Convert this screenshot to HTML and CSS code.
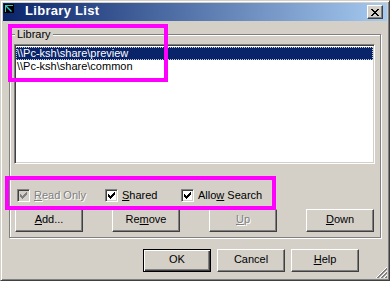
FILE: index.html
```html
<!DOCTYPE html>
<html>
<head>
<meta charset="utf-8">
<title>Library List</title>
<link rel="stylesheet" href="styles.css">
</head>
<body>
<div class="window">
  <div class="titlebar">
    <svg class="app-icon" width="10" height="9" viewBox="0 0 10 9">
      <rect width="10" height="9" fill="#000"/>
      <polygon points="1,1 9,1 9,2 3,2 8,7 7,8 2,3 2,8 1,8" fill="#33c6c6"/>
    </svg>
    <span class="title">Library List</span>
    <div class="close-btn">
      <svg width="8" height="7" viewBox="0 0 8 7"><path d="M0 0h2v1H0z M6 0h2v1H6z M1 1h2v1H1z M5 1h2v1H5z M2 2h4v1H2z M3 3h2v1H3z M2 4h4v1H2z M1 5h2v1H1z M5 5h2v1H5z M0 6h2v1H0z M6 6h2v1H6z" fill="#000"/></svg>
    </div>
  </div>
  <div class="content">
    <fieldset class="group">
      <legend>Library</legend>
      <div class="listbox">
        <div class="item selected">\\Pc-ksh\share\preview</div>
        <div class="item">\\Pc-ksh\share\common</div>
      </div>
      <div class="checks">
        <div class="check disabled w1">
          <span class="box"><svg width="7" height="7" viewBox="0 0 7 7"><path d="M6 0h1v1H6z M5 1h2v1H5z M0 2h1v1H0z M4 2h3v1H4z M0 3h2v1H0z M3 3h3v1H3z M0 4h5v1H0z M1 5h3v1H1z M2 6h1v1H2z"/></svg></span>
          <span class="lbl"><u>R</u>ead Only</span>
        </div>
        <div class="check w2">
          <span class="box"><svg width="7" height="7" viewBox="0 0 7 7"><path d="M6 0h1v1H6z M5 1h2v1H5z M0 2h1v1H0z M4 2h3v1H4z M0 3h2v1H0z M3 3h3v1H3z M0 4h5v1H0z M1 5h3v1H1z M2 6h1v1H2z"/></svg></span>
          <span class="lbl"><u>S</u>hared</span>
        </div>
        <div class="check">
          <span class="box"><svg width="7" height="7" viewBox="0 0 7 7"><path d="M6 0h1v1H6z M5 1h2v1H5z M0 2h1v1H0z M4 2h3v1H4z M0 3h2v1H0z M3 3h3v1H3z M0 4h5v1H0z M1 5h3v1H1z M2 6h1v1H2z"/></svg></span>
          <span class="lbl">Allo<u>w</u> Search</span>
        </div>
      </div>
      <div class="btn-row">
        <button class="btn"><u>A</u>dd...</button>
        <button class="btn">Re<u>m</u>ove</button>
        <button class="btn disabled"><u>U</u>p</button>
        <button class="btn"><u>D</u>own</button>
      </div>
    </fieldset>
    <div class="footer">
      <button class="btn default">OK</button>
      <button class="btn">Cancel</button>
      <button class="btn"><u>H</u>elp</button>
    </div>
  </div>
  <svg class="grip" width="12" height="12" viewBox="0 0 12 12">
    <path d="M11 0L0 11 M11 4L4 11 M11 8L8 11" stroke="#fff" stroke-width="1"/>
    <path d="M11 1L1 11 M11 2L2 11 M11 5L5 11 M11 6L6 11 M11 9L9 11 M11 10L10 11" stroke="#808080" stroke-width="1"/>
  </svg>
</div>
<div class="mark mark-list"></div>
<div class="mark mark-checks"></div>
</body>
</html>
```

FILE: styles.css
```css
html, body {
  margin: 0;
  padding: 0;
}

body {
  width: 390px;
  height: 281px;
  overflow: hidden;
  background: #d4d0c8;
  font-family: "Liberation Sans", Arial, sans-serif;
  font-size: 11px;
  color: #000;
}

.window {
  box-sizing: border-box;
  width: 390px;
  height: 281px;
  border: 1px solid;
  border-color: #d4d0c8 #404040 #404040 #d4d0c8;
  padding: 2px;
  box-shadow: inset 1px 1px #fff, inset -1px -1px #808080;
  background: #d4d0c8;
  display: flex;
  flex-direction: column;
  position: relative;
}

.titlebar {
  height: 18px;
  box-sizing: border-box;
  padding: 1px 4px 0 1px;
  background: linear-gradient(to right, #0a246a, #a6caf0);
  display: flex;
  align-items: flex-start;
}

.app-icon {
  display: block;
  flex: none;
}

.title {
  flex: 1;
  margin-left: 11px;
  color: #fff;
  font-weight: bold;
  font-size: 13px;
  line-height: 13px;
  letter-spacing: 0.3px;
  white-space: nowrap;
}

.close-btn {
  flex: none;
  width: 16px;
  height: 14px;
  margin-top: 1px;
  box-sizing: border-box;
  background: #d4d0c8;
  border: 1px solid;
  border-color: #fff #404040 #404040 #fff;
  box-shadow: inset -1px -1px #808080;
  display: flex;
  align-items: center;
  justify-content: center;
}

.close-btn svg {
  display: block;
}

.content {
  flex: 1;
  padding: 7px 6px 0 6px;
  display: flex;
  flex-direction: column;
}

.group {
  margin: 0;
  padding: 3px 5px 5px 4px;
  min-width: 0;
  border: 1px solid #808080;
  box-shadow: inset 1px 1px #fff, 1px 1px #fff;
}

.group legend {
  margin-left: 1px;
  padding: 0 2px;
  line-height: 13px;
  background: #d4d0c8;
}

.listbox {
  height: 120px;
  box-sizing: border-box;
  background: #fff;
  border: 1px solid;
  border-color: #808080 #fff #fff #808080;
  box-shadow: inset 1px 1px #404040, inset -1px -1px #d4d0c8;
  padding: 2px 1px 0 1px;
}

.item {
  height: 13px;
  line-height: 13px;
  padding-left: 1px;
  white-space: nowrap;
}

.item.selected {
  background: #0a246a;
  color: #fff;
  outline: 1px dotted #c8cce0;
  outline-offset: -1px;
}

.checks {
  display: flex;
  align-items: center;
  height: 13px;
  margin-top: 25px;
  padding-left: 3px;
}

.check {
  display: flex;
  align-items: center;
  gap: 4px;
}

.check.w1 {
  width: 88px;
}

.check.w2 {
  width: 76px;
}

.box {
  flex: none;
  width: 13px;
  height: 13px;
  box-sizing: border-box;
  border: 1px solid;
  border-color: #808080 #fff #fff #808080;
  box-shadow: inset 1px 1px #404040, inset -1px -1px #d4d0c8;
  background: #fff;
  display: flex;
  align-items: center;
  justify-content: center;
}

.box svg {
  display: block;
  fill: #000;
}

.lbl {
  line-height: 13px;
  white-space: nowrap;
}

.check.disabled .box {
  background: #d4d0c8;
}

.check.disabled .box svg {
  fill: #808080;
}

.check.disabled .lbl {
  color: #808080;
  text-shadow: 1px 1px #fff;
}

u {
  text-underline-offset: 1px;
}

.btn-row {
  display: flex;
  justify-content: space-between;
  margin: 7px 1px 0 1px;
}

.btn {
  width: 68px;
  height: 23px;
  box-sizing: border-box;
  margin: 0;
  padding: 0 0 3px 0;
  font: inherit;
  color: #000;
  background: #d4d0c8;
  border: 1px solid;
  border-color: #fff #404040 #404040 #fff;
  border-radius: 0;
  box-shadow: inset -1px -1px #808080;
}

.btn.disabled {
  color: #808080;
  text-shadow: 1px 1px #fff;
}

.btn.default {
  border: 1px solid #000;
  box-shadow: inset 1px 1px #fff, inset -1px -1px #404040, inset -2px -2px #808080;
}

.footer {
  display: flex;
  justify-content: flex-end;
  gap: 6px;
  margin-top: 11px;
  padding-right: 22px;
}

.grip {
  position: absolute;
  right: 1px;
  bottom: 1px;
  display: block;
}

.mark {
  position: absolute;
  box-sizing: border-box;
  border: 4px solid #ff00ff;
  pointer-events: none;
}

.mark-list {
  left: 8px;
  top: 24px;
  width: 160px;
  height: 58px;
}

.mark-checks {
  left: 5px;
  top: 176px;
  width: 271px;
  height: 34px;
}
```
